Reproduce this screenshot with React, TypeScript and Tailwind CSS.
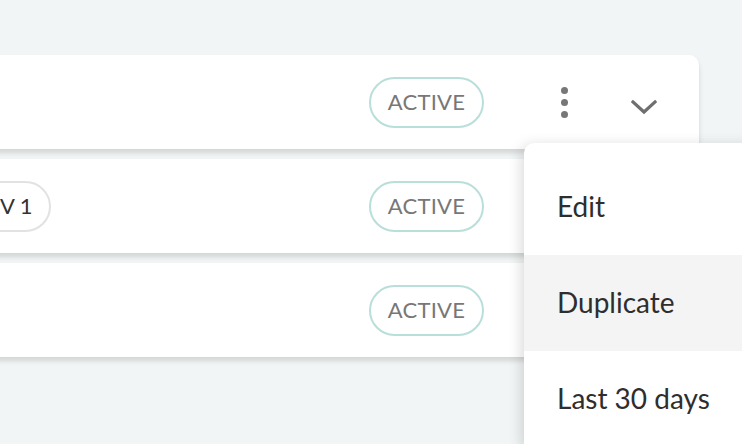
import React from "react";

type Row = {
  id: string;
  tag?: string;
};

const rows: Row[] = [{ id: "r1" }, { id: "r2", tag: "V 1" }, { id: "r3" }];

const menuItems = ["Edit", "Duplicate", "Last 30 days"];

function StatusBadge() {
  return (
    <span className="mr-[40px] inline-flex h-[51px] w-[115px] items-center justify-center rounded-full border-2 border-[#b9dfda] pb-[2px] text-[22px] tracking-[0.01em] text-[#777]">
      ACTIVE
    </span>
  );
}

function Kebab() {
  return (
    <div className="flex w-[80px] flex-col items-center gap-[5px]">
      <span className="h-[7px] w-[7px] rounded-full bg-[#777]" />
      <span className="h-[7px] w-[7px] rounded-full bg-[#777]" />
      <span className="h-[7px] w-[7px] rounded-full bg-[#777]" />
    </div>
  );
}

function Chevron() {
  return (
    <div className="flex w-[80px] items-center justify-center pt-[10px]">
      <svg width="26" height="16" viewBox="0 0 26 16" fill="none">
        <path
          d="M2 3 L13 13 L24 3"
          stroke="#6f6f6f"
          strokeWidth="3.2"
          strokeLinecap="square"
        />
      </svg>
    </div>
  );
}

export default function App() {
  return (
    <div
      className="relative h-[444px] w-[742px] overflow-hidden bg-[#f2f5f5]"
      style={{ fontFamily: "Lato, 'Open Sans', sans-serif" }}
    >
      <div className="ml-[-40px] flex w-[739px] flex-col gap-[10px] pt-[55px]">
        {rows.map((row, i) => (
          <div
            key={row.id}
            className={`flex h-[94px] items-center bg-white pl-[16px] pr-[15px] shadow-[0_4px_5px_rgba(0,0,0,0.13)] ${
              i === 0 ? "rounded-tr-[10px]" : ""
            }`}
          >
            {row.tag && (
              <span className="inline-flex h-[51px] items-center rounded-full border-2 border-[#e2e2e2] pb-[2px] pl-[22px] pr-[16px] text-[22px] text-[#333]">
                {row.tag}
              </span>
            )}
            <div className="ml-auto flex items-center">
              <StatusBadge />
              <Kebab />
              <Chevron />
            </div>
          </div>
        ))}
      </div>

      <div className="absolute left-[524px] top-[143px] w-[240px] rounded-tl-[10px] bg-white pt-[16px] shadow-[-3px_2px_14px_rgba(0,0,0,0.14)]">
        {menuItems.map((label, i) => (
          <div
            key={label}
            className={`flex h-[96px] items-center pb-[3px] pl-[33px] text-[28px] text-[#2e2e2e] ${
              i === 1 ? "bg-[#f4f4f4]" : ""
            }`}
          >
            {label}
          </div>
        ))}
      </div>
    </div>
  );
}
